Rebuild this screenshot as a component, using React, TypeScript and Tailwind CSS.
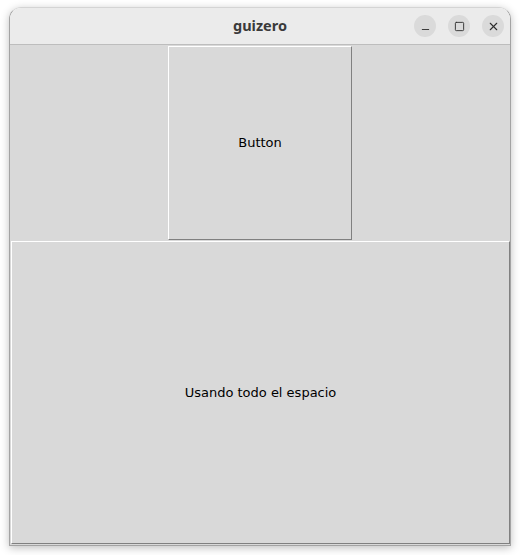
import { Minus, Square, X } from "lucide-react";

const App = () => {
    return (
        <div className="w-[520px] h-[555px] bg-white pt-[7px] pl-[9px]">
            <div className="w-[502px] h-[539px] flex flex-col rounded-t-[12px] overflow-hidden border border-[#a3a3a3] border-t-[#d4d4d4] shadow-[0_2px_8px_rgba(0,0,0,0.25)]">
                {/* title bar */}
                <div className="relative h-[37px] shrink-0 flex items-center justify-center bg-[#ebebeb] border-b border-[#bdbdbd]">
                    <span className="text-[14.5px] font-bold text-[#3a3a3a] font-['Noto_Sans',sans-serif]">guizero</span>
                    <div className="absolute right-[6px] top-[7px] flex gap-[12px]">
                        <span className="w-[22px] h-[22px] rounded-full bg-[#dadada] flex items-center justify-center">
                            <Minus size={11} strokeWidth={2} className="mt-[7px] text-[#2e2e2e]" />
                        </span>
                        <span className="w-[22px] h-[22px] rounded-full bg-[#dadada] flex items-center justify-center">
                            <Square size={11} strokeWidth={2} className="text-[#2e2e2e]" />
                        </span>
                        <span className="w-[22px] h-[22px] rounded-full bg-[#dadada] flex items-center justify-center">
                            <X size={13} strokeWidth={2} className="text-[#2e2e2e]" />
                        </span>
                    </div>
                </div>
                {/* content */}
                <div className="flex-1 flex flex-col items-center bg-[#d9d9d9] font-['DejaVu_Sans',sans-serif] text-[13px] text-black">
                    <div className="mt-[1px] w-[184px] h-[194px] flex items-center justify-center border border-white border-r-[#808080] border-b-[#808080]">
                        Button
                    </div>
                    <div className="mt-[1px] self-stretch ml-[1px] h-[303px] flex items-center justify-center border border-white border-r-[#808080] border-b-[#808080]">
                        Usando todo el espacio
                    </div>
                </div>
            </div>
        </div>
    );
};

export default App;
